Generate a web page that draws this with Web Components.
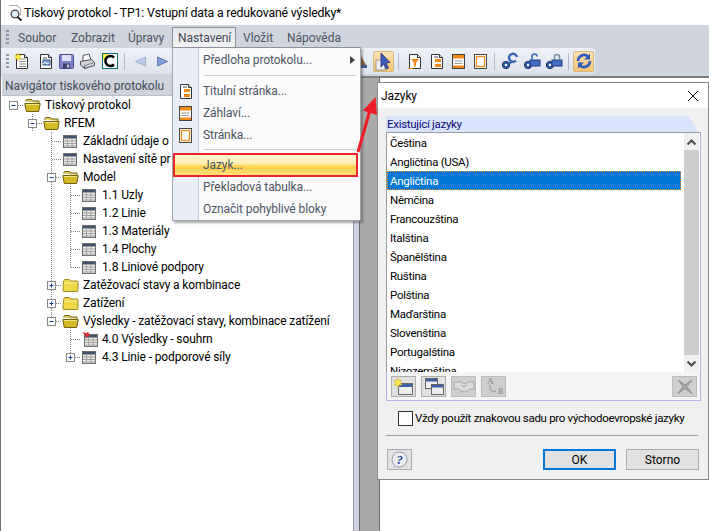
<!DOCTYPE html>
<html lang="cs"><head><meta charset="utf-8"><title>Jazyky</title>
<style>html,body{margin:0;padding:0;background:#fff}body{font:12px Roboto,"Noto Sans",sans-serif}</style>
</head><body>
<rp-app>
  <rp-title>Tiskový protokol - TP1: Vstupní data a redukované výsledky*</rp-title>
  <rp-menubar></rp-menubar>
  <rp-toolbar></rp-toolbar>
  <rp-workspace>
    <rp-navigator>
      <tree-node cells="m0" icon="open">Tiskový protokol</tree-node>
      <tree-node cells="_ m" icon="open">RFEM</tree-node>
      <tree-node cells="_ _ t" icon="table">Základní údaje o</tree-node>
      <tree-node cells="_ _ t" icon="table">Nastavení sítě pr</tree-node>
      <tree-node cells="_ _ m" icon="open">Model</tree-node>
      <tree-node cells="_ _ v t" icon="table">1.1 Uzly</tree-node>
      <tree-node cells="_ _ v t" icon="table">1.2 Linie</tree-node>
      <tree-node cells="_ _ v t" icon="table">1.3 Materiály</tree-node>
      <tree-node cells="_ _ v t" icon="table">1.4 Plochy</tree-node>
      <tree-node cells="_ _ v l" icon="table">1.8 Liniové podpory</tree-node>
      <tree-node cells="_ _ p" icon="closed">Zatěžovací stavy a kombinace</tree-node>
      <tree-node cells="_ _ p" icon="closed">Zatížení</tree-node>
      <tree-node cells="_ _ me" icon="open">Výsledky - zatěžovací stavy, kombinace zatížení</tree-node>
      <tree-node cells="_ _ _ t" icon="pin">4.0 Výsledky - souhrn</tree-node>
      <tree-node cells="_ _ _ pe" icon="table">4.3 Linie - podporové síly</tree-node>
    </rp-navigator>
  </rp-workspace>
  <rp-dropdown></rp-dropdown>
  <rp-arrow></rp-arrow>
  <rp-dialog></rp-dialog>
</rp-app>
<script>
const FONT='Roboto,"Noto Sans",sans-serif';
const svg=(w,h,b)=>`<svg xmlns="http://www.w3.org/2000/svg" width="${w}" height="${h}" viewBox="0 0 ${w} ${h}" style="display:block">${b}</svg>`;
const page=(inner)=>`<path d="M2.500 1.500h8l3 3v11h-11z" fill="#fff" stroke="#333"/><path d="M10.500 1.500v3h3" fill="#ddd" stroke="#333"/>${inner}`;
const link=`<circle cx="5" cy="13" r="3.600" fill="#2f5fb0" stroke="#1b2f60"/><circle cx="5" cy="13" r="1.200" fill="#fff"/>`;
const TABLE=`<rect x=".5" y=".5" width="13" height="12" fill="#ebe9e4" stroke="#6c6c6c"/><rect x="1" y="1" width="12" height="2.500" fill="#44536c"/><path d="M1 6h12M1 8.500h12M1 11h12M4.500 3.500v9M9 3.500v9" stroke="#a3a3a3"/>`;
const ICONS={
 new:svg(17,17,page(`<path d="M5 6h7M5 8.500h7M5 11h7M5 13.500h7" stroke="#888"/><path d="M4 0l1 2.500 2.500-.5-1.500 2 1.500 2-2.500-.5-1 2.500-1-2.500-2.500.5 1.500-2-1.500-2 2.500.5z" fill="#ffe94a" stroke="#d8c030" stroke-width=".5"/>`)),
 open:svg(17,17,page(`<rect x="5" y="7" width="7" height="5" fill="#7da3d8" stroke="#33568c"/><path d="M5 11l2-2 2 2 2-1" stroke="#fff" fill="none"/><path d="M5 5h4" stroke="#555"/>`)),
 save:svg(17,17,`<rect x="1.500" y="1.500" width="14" height="14" rx="1" fill="#7d83c6" stroke="#4a4f8f"/><rect x="4" y="2" width="9" height="6" fill="#dfe1f3"/><rect x="5" y="10.500" width="7" height="5" fill="#40446e"/><rect x="9" y="11.500" width="2" height="3" fill="#c6c8e4"/>`),
 print:svg(17,17,`<path d="M4 8V2.500l6-1.500 2 6z" fill="#fff" stroke="#555"/><path d="M1.500 8.500l11-2 3 3v3l-10 3-4-3.500z" fill="#cfd2d8" stroke="#555"/><path d="M5.500 12.500l10-3" stroke="#888"/><path d="M5.500 12.500v3" stroke="#555"/>`),
 refresh:svg(16,16,`<rect x=".5" y=".5" width="15" height="15" fill="#fff" stroke="#0d6e74"/><path d="M1 1h6L1 8z" fill="#f4ef3c"/><path d="M12 4.500A5 5 0 1 0 12 11.500" fill="none" stroke="#000" stroke-width="2.600"/>`),
 left:svg(13,13,`<path d="M11.500 2v9L1.500 6.500z" fill="#bcc9e6" stroke="#a5b2cf"/>`),
 right:svg(13,13,`<path d="M1.500 2v9l10-4.500z" fill="#7f9fe0" stroke="#5f79b8"/>`),
 sliver:svg(6,17,`<path d="M0 3l5 9-1 3H0z" fill="#8a5a30"/><path d="M0 12h6v3H0z" fill="#3a58a0"/>`),
 cursor:svg(17,19,`<rect x="1" y="8" width="9" height="10" fill="#eee" stroke="#999"/><path d="M6 1l9 9.500-4 .5 2.500 5-2.500 1-2-5-3 3z" fill="#3c5cc0" stroke="#20306c" stroke-width=".8"/>`),
 filter:svg(15,17,page(`<path d="M4 6h8l-3 4v3l-2 1v-4z" fill="#ef8a1c"/><path d="M1 15.500h5" stroke="#ef8a1c"/>`)),
 title:svg(15,17,page(`<path d="M5 4h4" stroke="#555"/><rect x="6" y="6" width="6" height="3" fill="#f28a1a"/><rect x="6" y="11" width="6" height="3" fill="#f28a1a"/>`)),
 header:svg(15,17,`<rect x="1.500" y="1.500" width="12" height="14" fill="#fff" stroke="#444"/><rect x="2" y="2" width="11" height="3.500" fill="#f28a1a"/><path d="M3.500 8h8M3.500 10.500h8" stroke="#999"/><rect x="2" y="12.500" width="11" height="2.500" fill="#f28a1a"/>`),
 pagei:svg(15,17,`<rect x="1.500" y="1.500" width="12" height="14" fill="#fff" stroke="#444"/><rect x="3.500" y="3.500" width="8" height="10" fill="#fff" stroke="#f28a1a" stroke-width="1.300"/>`),
 link1:svg(18,18,`${link}<path d="M8 12l3-3" stroke="#2f5fb0" stroke-width="2"/><path d="M16 5a4 4 0 1 0-1 3.500" fill="none" stroke="#3c66b8" stroke-width="2.400"/>`),
 link2:svg(18,18,`${link}<rect x="7" y="8" width="10" height="6" fill="#3f6fc4" stroke="#223a7c"/><path d="M9 8V4.500a2.500 2.500 0 0 1 5 0" fill="none" stroke="#3c66b8" stroke-width="1.600"/>`),
 link3:svg(18,18,`${link}<rect x="7" y="8" width="10" height="6" fill="#3f6fc4" stroke="#223a7c"/><path d="M9.500 8V5a2.500 2.500 0 0 1 5 0v3" fill="none" stroke="#7f8daa" stroke-width="1.600"/>`),
 sync:svg(18,18,`<path d="M3 9a6 6 0 0 1 10-4.500M15 9a6 6 0 0 1-10 4.500" fill="none" stroke="#2a5bc0" stroke-width="2.600"/><path d="M15 1.500v6h-6zM3 16.500v-6h6z" fill="#2a5bc0"/>`),
 star:svg(24,19,`<rect x="6.500" y="6.500" width="14" height="11" fill="#eee" stroke="#666"/><rect x="7" y="7" width="13" height="3" fill="#3a5fa8"/><path d="M6 1l1.200 2.800 3-.4-1.800 2.400 1.800 2.400-3-.4L6 10.600 4.800 7.800l-3 .4 1.800-2.400-1.800-2.400 3 .4z" fill="#ffe94a" stroke="#c9b230" stroke-width=".6"/>`),
 copy:svg(24,19,`<rect x="3.500" y="1.500" width="12" height="10" fill="#eee" stroke="#666"/><rect x="4" y="2" width="11" height="2.500" fill="#3a5fa8"/><rect x="9.500" y="7.500" width="12" height="10" fill="#eee" stroke="#666"/><rect x="10" y="8" width="11" height="2.500" fill="#3a5fa8"/>`),
 hand:svg(24,19,`<path d="M2 5h7l4 2 3-2h6v7h-4l-4 3-5-1-3-2H2z" fill="#dcdcdc" stroke="#a5a5a5"/><path d="M9 8l3 2 3-2" stroke="#a5a5a5" fill="none"/>`),
 ab:svg(24,21,`<text x="5" y="8" font-family="Liberation Serif,serif" font-size="9" font-weight="700" fill="#999">A</text><text x="16" y="18" font-family="Liberation Serif,serif" font-size="8" font-weight="700" fill="#999">B</text><path d="M8 9c-1 5 2 7 6 6" fill="none" stroke="#aaa" stroke-width="1.600"/>`),
 cross:svg(24,19,`<path d="M5 3l7 5 7-5-5 6.500 5 7-7-5-7 5 5-7z" fill="#a8a8a8" stroke="#8d8d8d"/>`),
 help:svg(19,18,`<circle cx="9.500" cy="8.500" r="7.500" fill="#eef0f6" stroke="#9a9aa8"/><path d="M4 14l-1 3 4-1.500z" fill="#c9c9d4"/><text x="9.500" y="13" text-anchor="middle" font-family="Liberation Serif,serif" font-style="italic" font-weight="700" font-size="13" fill="#2a3f8f">?</text>`),
 folderO:svg(17,15,`<path d="M1.500 3.500l1-2h5l1 1.500h6.500v2" fill="#dccb62" stroke="#7a6a14"/><path d="M.8 5.500h15.400l-1.500 8H2.300z" fill="#d4bb26" stroke="#6f6012"/><path d="M2 6.500h13" stroke="#f0e484"/>`),
 folderC:svg(17,15,`<path d="M1.500 3.500l1-2h5l1 1.500h6.500a1 1 0 0 1 1 1v8.500a1 1 0 0 1-1 1h-13a1 1 0 0 1-1-1z" fill="#efd84a" stroke="#a08c20"/><path d="M2 5h13" stroke="#faf1a0"/>`),
 table:svg(14,13,TABLE),
 pinT:svg(16,16,`<g transform="translate(2 3)">${TABLE}</g><path d="M0 1l4 1 2-1 2 3-2 2-1 1-2-3z" fill="#d9303a"/>`)
};
function root(el,css,html){const s=el.attachShadow({mode:'open'});s.innerHTML=`<style>${css}</style>${html}`;return s}
const icon=n=>`<ui-icon name="${n}"></ui-icon>`;

class UiIcon extends HTMLElement{connectedCallback(){if(this.shadowRoot)return;root(this,':host{display:block;flex:none;line-height:0}',ICONS[this.getAttribute('name')]||'')}}
customElements.define('ui-icon',UiIcon);

class RpApp extends HTMLElement{constructor(){super();root(this,`:host{display:flex;flex-direction:column;position:relative;width:709px;height:531px;overflow:hidden;box-sizing:border-box;border-left:1px solid #6f6f6f;background:#fff;color:#000;font:12px ${FONT}}`,'<slot></slot>')}}
customElements.define('rp-app',RpApp);

class RpTitle extends HTMLElement{constructor(){super();root(this,`:host{display:flex;align-items:center;gap:3px;height:25px;flex:none;padding-left:6px;background:#fff;font-size:12.300px;letter-spacing:-.17px;color:#000;white-space:nowrap}
.i{width:14px;height:17px}`,`<div class="i">${svg(16,17,`<path d="M2.500 1.500h8l3 3v7" fill="#fff" stroke="#aaa"/><circle cx="8" cy="10" r="3.800" fill="#dff0fa" stroke="#444" stroke-width="1.300"/><path d="M10.500 13l4 3.500" stroke="#222" stroke-width="2"/>`)}</div><slot></slot>`)}}
customElements.define('rp-title',RpTitle);

class RpMenubar extends HTMLElement{constructor(){super();const items=[['Soubor',53],['Zobrazit',57],['Úpravy',44],['Nastavení',64],['Vložit',44],['Nápověda',60]];
root(this,`:host{display:flex;flex:none;height:23px;background:#d0d4dd;color:#4c5563;font-size:12px;padding-left:5px;box-sizing:border-box;align-items:flex-end}
.g{width:3px;height:14px;margin:0 9px 4px 0;background:repeating-linear-gradient(#8c93a0 0 2px,transparent 2px 4px);flex:none}
.m{height:21px;display:flex;align-items:center;box-sizing:border-box;flex:none;white-space:nowrap}
.a{background:linear-gradient(#e4e6ea,#f3f3f4);border:1px solid #8b9099;border-bottom:0;padding-left:5px;margin-right:7px;color:#3f4854}`,
`<div class="g"></div>`+items.map(([t,w])=>`<div class="m${t=='Nastavení'?' a':''}" style="width:${w}px">${t}</div>`).join(''))}}
customElements.define('rp-menubar',RpMenubar);

class RpToolbar extends HTMLElement{constructor(){super();
const g=(n,w)=>`<div class="b" style="width:${w}px">${icon(n)}</div>`;
const sp=w=>`<div style="width:${w}px;flex:none"></div>`;
root(this,`:host{display:block;flex:none;height:28px;background:#d0d4dd}
.bar{display:flex;align-items:center;width:594px;height:26px;box-sizing:border-box;padding-left:5px;background:linear-gradient(#eef1f7,#dde2ec);border-radius:0 4px 4px 0}
.grip{width:3px;height:14px;background:repeating-linear-gradient(#8c93a0 0 2px,transparent 2px 4px);margin-right:2px;flex:none}
.b{display:flex;justify-content:center;flex:none}
.s{width:1px;height:17px;background:#b4bac6;flex:none}
.on{width:21px;height:21px;display:flex;align-items:center;justify-content:center;flex:none;border:1px solid #d9b980;border-radius:2px;box-sizing:border-box;background:linear-gradient(#fbe2b4,#f9c274)}`,
`<div class="bar"><div class="grip"></div>${g('new',23)}${g('open',24)}${g('save',17)}${g('print',25)}${g('refresh',20)}${sp(4)}<div class="s"></div>${sp(8)}${g('left',15)}${sp(7)}${g('right',15)}${sp(191)}${g('sliver',6)}${sp(6)}<div class="on">${icon('cursor')}</div>${sp(4)}<div class="s"></div>${sp(4)}${g('filter',22)}${g('title',22)}${g('header',22)}${g('pagei',22)}${sp(3)}<div class="s"></div>${sp(4)}${g('link1',22)}${g('link2',22)}${g('link3',22)}${sp(3)}<div class="s"></div>${sp(4)}<div class="on">${icon('sync')}</div></div>`)}}
customElements.define('rp-toolbar',RpToolbar);

class RpWorkspace extends HTMLElement{constructor(){super();
root(this,`:host{display:flex;flex:1;min-height:0;background:#fff;padding-left:1px}
.split{width:5px;flex:none;background:#cdd3e2;border-left:1px solid #9da3ad;box-sizing:content-box}
.strip{width:19px;flex:none;background:#a9a9a9;border-left:1px solid #6b6b6b;border-right:1px solid #6b6b6b}
.doc{flex:1;background:#fff}
.top{border-top:2px solid #7c7c7c}`,
`<slot></slot><div class="split"></div><div class="strip top"></div><div class="doc top"></div>`)}}
customElements.define('rp-workspace',RpWorkspace);

class RpNavigator extends HTMLElement{constructor(){super();
root(this,`:host{display:flex;flex-direction:column;width:351px;flex:none;background:#fff}
.h{height:20px;flex:none;background:#cfd3dc;color:#414b5a;font-size:12px;letter-spacing:-.02px;display:flex;align-items:center;padding-left:3px;border-bottom:1px solid #bcc0c9;box-sizing:border-box}
.t{flex:1;overflow:hidden}`,
`<div class="h">Navigátor tiskového protokolu</div><div class="t"><slot></slot></div>`)}}
customElements.define('rp-navigator',RpNavigator);

const cellSvg=c=>{const D='stroke="#808080" stroke-dasharray="1 1" shape-rendering="crispEdges" fill="none"';
 const V=`<path d="M9.500 0v18" ${D}/>`,U=`<path d="M9.500 0v9" ${D}/>`,H=`<path d="M10 9.500h9" ${D}/>`;
 const box=(p)=>`<rect x="5.500" y="5.500" width="8" height="8" fill="#fff" stroke="#8a8a8a"/><path d="M7.500 9.500h4${p?'M9.500 7.500v4':''}" stroke="#1c3d8f"/>`;
 const b={_:'',v:V,t:V+H,l:U+H,m0:H+box(0),m:U+H+V+box(0),me:U+H+box(0),p:V+H+box(1),pe:U+H+box(1)}[c];
 return svg(19,18,b||'')};
class TreeNode extends HTMLElement{connectedCallback(){if(this.shadowRoot)return;
 const cells=this.getAttribute('cells').split(' ');const ic=this.getAttribute('icon');
 const map={open:'folderO',closed:'folderC',table:'table',pin:'pinT'};
 const isT=ic=='table'||ic=='pin';
 root(this,`:host{display:flex;align-items:center;height:18px;padding-left:2px;white-space:nowrap;font-size:12px;letter-spacing:-.12px;color:#000}
 .i{width:19px;display:flex;justify-content:${isT?'flex-start':'center'};padding-left:${isT?'2px':'0'};box-sizing:border-box;margin-right:3px;flex:none}`,
 cells.map(cellSvg).join('')+`<div class="i">${icon(map[ic])}</div><slot></slot>`);}}
customElements.define('tree-node',TreeNode);

class RpDropdown extends HTMLElement{constructor(){super();
 const it=(t,i)=>`<div class="it"><div class="gut">${i?icon(i):''}</div><div class="tx">${t}</div></div>`;
 root(this,`:host{position:absolute;left:171px;top:47px;width:189px;height:174px;box-sizing:border-box;background:linear-gradient(90deg,#e9edf5 0 25px,#c6c9cf 25px 26px,#fbfbfb 26px);border:1px solid #a3a6ac;border-top-color:#8b9099;box-shadow:2px 2px 2px rgba(70,70,70,.45);font-size:12px;letter-spacing:-.08px;color:#4c5563;display:flex;flex-direction:column;padding-top:1px;z-index:1}
 .it{display:flex;height:22px;align-items:center;flex:none;position:relative}
 .gut{width:25px;display:flex;justify-content:center;flex:none}
 .tx{margin-left:5px;white-space:nowrap}
 .sep{height:1px;background:#c8c8c8;margin:4px 4px 4px 31px;flex:none}
 .arr{position:absolute;right:5px;top:7px;width:0;height:0;border-left:5px solid #444;border-top:4px solid transparent;border-bottom:4px solid transparent}
 .act{height:24px;margin:3px 2px -1px 0;box-sizing:border-box;border:2px solid #e8242c;background:linear-gradient(#fff7d2,#ffefb4 42%,#ffd04a 58%,#ffdf78)}
 .act .gut{width:23px}`,
 `<div class="it"><div class="gut"></div><div class="tx">Předloha protokolu...</div><div class="arr"></div></div><div class="sep"></div>
 ${it('Titulní stránka...','title')}${it('Záhlaví...','header')}${it('Stránka...','pagei')}<div class="sep" style="margin:3px 4px 0 31px"></div>
 <div class="it act"><div class="gut"></div><div class="tx">Jazyk...</div></div>${it('Překladová tabulka...')}${it('Označit pohyblivé bloky')}`)}}
customElements.define('rp-dropdown',RpDropdown);

class RpArrow extends HTMLElement{constructor(){super();
 root(this,`:host{position:absolute;left:350px;top:90px;width:30px;height:70px;z-index:3}`,
 svg(30,70,`<path d="M7 62L19 20" stroke="#ee1c25" stroke-width="3" fill="none"/><path d="M24.500 7L12 20.500 26 25z" fill="#ee1c25"/>`))}}
customElements.define('rp-arrow',RpArrow);

class RpDialog extends HTMLElement{constructor(){super();
 const langs=['Čeština','Angličtina (USA)','Angličtina','Němčina','Francouzština','Italština','Španělština','Ruština','Polština','Maďarština','Slovenština','Portugalština','Nizozemština'];
 const tb=(n,d,st='')=>`<div class="tb${d?' dis':''}" style="${st}">${icon(n)}</div>`;
 root(this,`:host{position:absolute;left:376px;top:82px;width:332px;height:398px;box-sizing:border-box;background:#f0f0f0;border:1px solid #8a8a8a;display:flex;flex-direction:column;font-size:11.500px;letter-spacing:-.3px;color:#000;z-index:2}
 .ttl{height:25px;flex:none;background:#fff;display:flex;align-items:center;justify-content:space-between;padding:0 9px 0 3px;font-size:12px;letter-spacing:-.1px}
 .body{flex:1;display:flex;flex-direction:column;padding:8px 9px 0 8px;min-height:0}
 .hdr{height:16px;flex:none;background:#d8e4fb;color:#0a0a78;display:flex;align-items:center;padding-left:1px;margin-right:1px;clip-path:polygon(0 0,calc(100% - 9px) 0,100% 100%,0 100%)}
 .grp{flex:none;height:269px;box-sizing:border-box;border-right:1px solid #b4b4ec;border-bottom:1px solid #b4b4ec;border-left:1px solid #b4b4ec;display:flex;flex-direction:column;width:315px}
 .list{height:240px;flex:none;box-sizing:border-box;border-top:1px solid #9a9a9a;border-left:1px solid #9a9a9a;margin:0 0 0 -1px;background:#fff;display:flex;overflow:hidden}
 .rows{flex:1;overflow:hidden;padding-right:3px}
 .r{height:19px;line-height:20px;padding-left:3px;box-sizing:border-box;white-space:nowrap}
 .sel{background:#0078d7;color:#fff;outline:1px dotted #f09030;outline-offset:-1px}
 .sb{width:15px;flex:none;background:#f0f0f0;display:flex;flex-direction:column;margin-right:1px}
 .ab{height:17px;flex:none;display:flex;align-items:center;justify-content:center}
 .th{height:205px;flex:none;background:#cdcdcd}
 .tools{height:28px;background:#f5f5f5;flex:none;display:flex;align-items:center;padding-left:4px;gap:5px}
 .tb{width:25px;height:21px;box-sizing:border-box;border:1px solid #adadad;background:#e1e1e1;display:flex;align-items:center;justify-content:center;flex:none}
 .dis{background:#cfcfcf;border-color:#bcbcbc}
 .chk{display:flex;align-items:center;height:34px;flex:none;padding-left:12px;gap:2px;white-space:nowrap}
 .box{width:13px;height:13px;border:1px solid #333;background:#fff;flex:none}
 .sep{height:1px;background:#a0a0a0;flex:none;margin-right:1px}
 .foot{display:flex;align-items:center;padding-top:13px;margin-left:1px}
 .btn{width:73px;height:21px;box-sizing:border-box;border:1px solid #adadad;background:#e1e1e1;display:flex;align-items:center;justify-content:center;flex:none;font-size:12px;letter-spacing:0}
 .def{border:2px solid #0078d7}`,
 `<div class="ttl"><span>Jazyky</span>${svg(12,12,`<path d="M1 1l10 10M11 1L1 11" stroke="#111" stroke-width="1"/>`)}</div>
 <div class="body">
  <div class="hdr">Existující jazyky</div>
  <div class="grp">
   <div class="list"><div class="rows">${langs.map(l=>`<div class="r${l=='Angličtina'?' sel':''}">${l}</div>`).join('')}</div>
    <div class="sb"><div class="ab">${svg(11,8,`<path d="M1.500 6.500L5.500 2.500L9.500 6.500" fill="none" stroke="#505050" stroke-width="2.200"/>`)}</div><div class="th"></div><div class="ab">${svg(11,8,`<path d="M1.500 1.500L5.500 5.500L9.500 1.500" fill="none" stroke="#505050" stroke-width="2.200"/>`)}</div></div></div>
   <div class="tools">${tb('star')}${tb('copy')}${tb('hand',1)}${tb('ab',1)}${tb('cross',1,'margin-left:auto;margin-right:3px')}</div>
  </div>
  <div class="chk"><div class="box"></div><span>Vždy použít znakovou sadu pro východoevropské jazyky</span></div>
  <div class="sep"></div>
  <div class="foot">${tb('help',0)}<div style="flex:1"></div><div class="btn def">OK</div><div style="width:10px"></div><div class="btn">Storno</div></div>
 </div>`)}}
customElements.define('rp-dialog',RpDialog);
</script>
</body></html>
